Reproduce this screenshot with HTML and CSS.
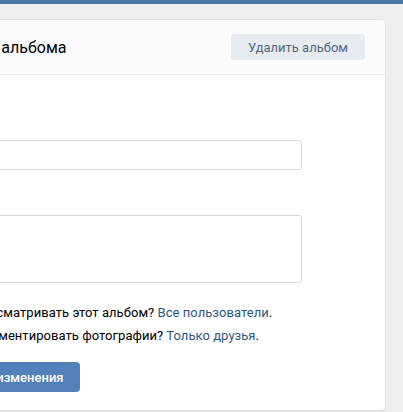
FILE: index.html
```html
<!DOCTYPE html>
<html lang="ru">
<head>
<meta charset="utf-8">
<title>Редактирование альбома</title>
<link rel="stylesheet" href="styles.css">
</head>
<body>
<div class="topbar"></div>
<main class="page">
  <section class="card">
    <header class="card-header">
      <h1 class="card-title">Редактирование альбома</h1>
      <button class="btn btn-secondary" type="button">Удалить альбом</button>
    </header>
    <form class="form">
      <div class="field">
        <label class="field-label">Название</label>
        <input class="input" type="text">
      </div>
      <div class="field">
        <label class="field-label">Описание</label>
        <textarea class="input textarea"></textarea>
      </div>
      <div class="privacy">
        <p class="privacy-row">Кто может просматривать этот альбом? <a class="link" href="#">Все пользователи</a>.</p>
        <p class="privacy-row">Кто может комментировать фотографии? <a class="link" href="#">Только друзья</a>.</p>
      </div>
      <div class="actions">
        <button class="btn btn-primary" type="button">Сохранить изменения</button>
      </div>
    </form>
  </section>
</main>
</body>
</html>
```

FILE: styles.css
```css
html, body {
  margin: 0;
  padding: 0;
}

body {
  background: #edeef0;
  font-family: Roboto, "Open Sans", "DejaVu Sans", sans-serif;
  font-size: 13px;
  color: #000;
  overflow: hidden;
  height: 412px;
}

.topbar {
  height: 4px;
  background: #4a76a8;
}

.page {
  padding-top: 16px;
}

.card {
  margin-left: -142px;
  width: 527px;
  background: #fff;
  border-radius: 4px;
  box-shadow: 0 1px 0 0 #d7d8db, 0 0 0 1px #e3e4e8;
}

.card-header {
  display: flex;
  align-items: center;
  justify-content: space-between;
  height: 54px;
  padding: 0 20px 0 14px;
  background: #fafbfc;
  border-bottom: 1px solid #e7e8ec;
  border-radius: 4px 4px 0 0;
}

.card-title {
  margin: 0;
  font-size: 16px;
  font-weight: 400;
  color: #000;
  white-space: nowrap;
}

.btn {
  font-family: inherit;
  font-size: 13px;
  border: 0;
  border-radius: 4px;
  padding: 0 17px;
  cursor: pointer;
  white-space: nowrap;
}

.btn-secondary {
  height: 26px;
  background: #e5ebf1;
  color: #55677d;
}

.btn-primary {
  height: 30px;
  background: #5181b8;
  color: #fff;
  font-weight: 500;
  padding: 0 16px;
}

.form {
  padding: 35px 0 18px 48px;
}

.field {
  display: flex;
  flex-direction: column;
  gap: 12px;
  margin-bottom: 15px;
}

.field-label {
  line-height: 18px;
  color: #000;
}

.input {
  box-sizing: border-box;
  width: 396px;
  height: 30px;
  margin: 0;
  border: 1px solid #d3d9de;
  border-radius: 3px;
  background: #fff;
  font-family: inherit;
  font-size: 13px;
}

.textarea {
  height: 68px;
  resize: none;
}

.privacy {
  display: flex;
  flex-direction: column;
  gap: 7px;
  margin-top: 22px;
}

.privacy-row {
  margin: 0;
  line-height: 16px;
  white-space: nowrap;
  letter-spacing: 0.05px;
}

.link {
  color: #2a5885;
  text-decoration: none;
}

.actions {
  margin-top: 18px;
  padding-left: 6px;
}
```
